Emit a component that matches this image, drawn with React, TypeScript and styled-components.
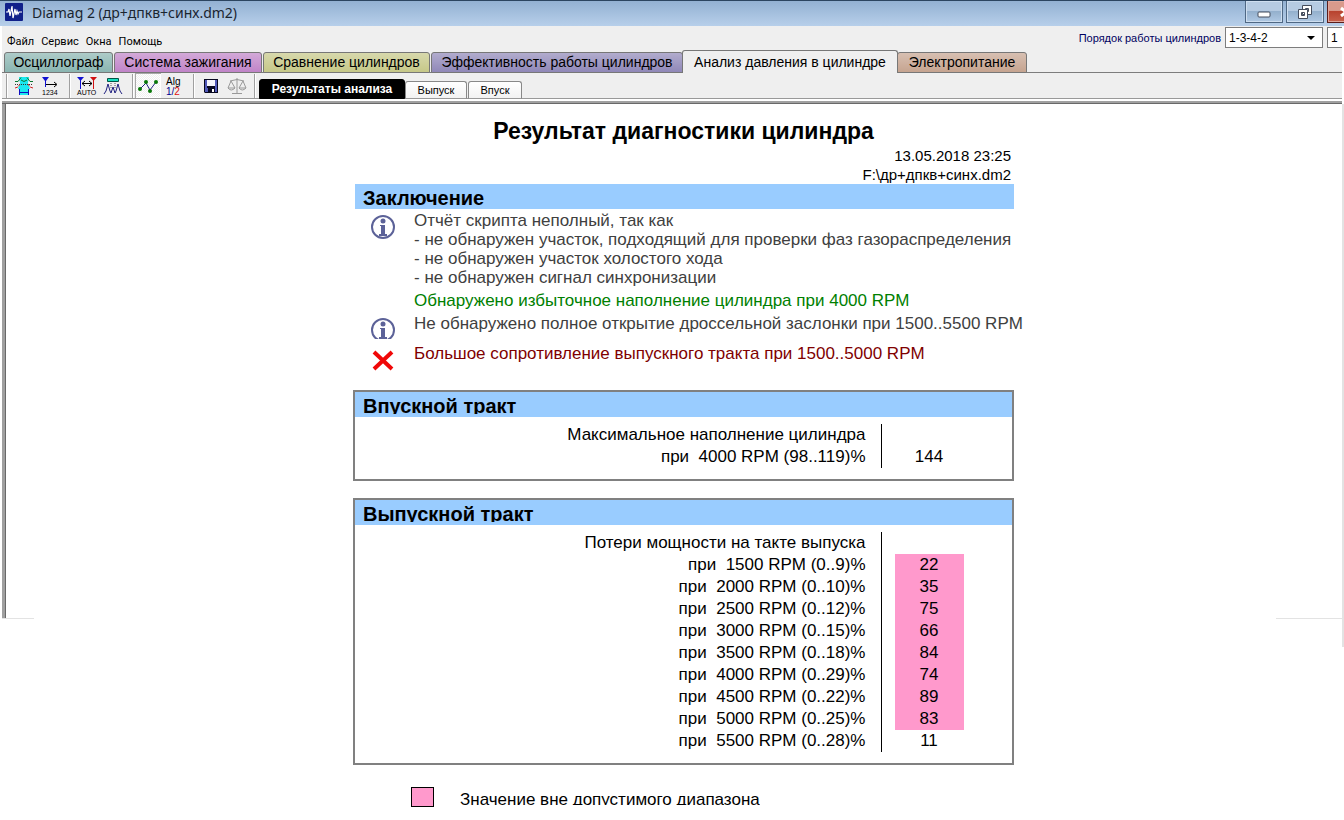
import React from "react";
import styled, { createGlobalStyle, css } from "styled-components";

const Global = createGlobalStyle`
  * { box-sizing: border-box; }
  body { margin: 0; background: #fff; color: #000; font-family: "Liberation Sans", Arial, sans-serif; }
  button, select { font: inherit; color: inherit; margin: 0; padding: 0; border-radius: 0; }
  h1, h2, p, ul { margin: 0; padding: 0; }
`;

const Window = styled.div`
  width: 100%;
  overflow-x: hidden;
`;

const TitleBar = styled.header`
  height: 26px;
  display: flex;
  align-items: flex-start;
  border-top: 1px solid #2c4560;
  background: linear-gradient(#93b1d2, #b7cfea);
  padding-left: 5px;
`;

const AppIcon = styled.svg`
  width: 18px;
  height: 18px;
  margin-top: 2px;
`;

const Caption = styled.span`
  flex: 1;
  padding-left: 9px;
  font: 14px/23px "Noto Sans", sans-serif;
  color: #1a2530;
  white-space: nowrap;
`;

const CaptionButtons = styled.div`
  display: flex;
  gap: 3px;
  margin-right: -21px;
`;

const CaptionButton = styled.button<{ $close?: boolean }>`
  width: 38px;
  height: 22px;
  display: grid;
  place-items: center;
  border: 1px solid ${(p) => (p.$close ? "#5b1d1a" : "#4f6884")};
  border-top: 0;
  box-shadow: inset 0 0 0 1px ${(p) => (p.$close ? "#e0a79c" : "#cfdff0")};
  background: ${(p) =>
    p.$close
      ? "linear-gradient(#d99a8c 0 45%, #b8432f 50%, #c8614c)"
      : "linear-gradient(#b6cbe2 0 45%, #94b0cd 50%, #b0c9e4)"};
`;

const Client = styled.div`
  margin: 0 2px;
  background: #efefef;
`;

const MenuRow = styled.div`
  height: 25px;
  display: flex;
  justify-content: space-between;
`;

const Menu = styled.nav`
  display: flex;
  align-items: flex-start;
  gap: 7px;
  padding: 9px 0 0 5px;
`;

const MenuItem = styled.button`
  border: 0;
  background: none;
  font: 11px/14px Roboto, sans-serif;
`;

const OrderBox = styled.div`
  display: flex;
  gap: 4px;
  padding-top: 1px;
  overflow: hidden;
  font-size: 12px;
  label { color: #000060; font-size: 11px; line-height: 22px; white-space: nowrap; }
`;

const SelectWrap = styled.div<{ $width: number }>`
  position: relative;
  width: ${(p) => p.$width}px;
  svg { position: absolute; right: 8px; top: 9px; pointer-events: none; }
`;

const Select = styled.select`
  width: 100%;
  height: 21px;
  appearance: none;
  border: 1px solid #7d7d7d;
  background: #fff;
  padding-left: 3px;
  line-height: 18px;
`;

const OrderClip = styled.div`
  width: 15px;
  overflow: hidden;
`;

const Tabs = styled.div`
  display: flex;
  align-items: flex-end;
  height: 22px;
  padding-left: 2px;
  box-shadow: inset 0 -1px #7d7d7d;
`;

const Tab = styled.button<{ $width: number; $color?: string; $active?: boolean }>`
  width: ${(p) => p.$width}px;
  height: 21px;
  margin-right: 1px;
  border: 1px solid #777;
  border-radius: 3px 3px 0 0;
  background: linear-gradient(rgba(255, 255, 255, 0.3), rgba(255, 255, 255, 0)) ${(p) => p.$color};
  font-size: 14px;
  line-height: 19px;
  white-space: nowrap;
  ${(p) =>
    p.$active &&
    css`
      height: 23px;
      margin: 0 -1px 0 -2px;
      background: #efefef;
      border-bottom: 0;
    `}
`;

const ToolBar = styled.div`
  display: flex;
  height: 28px;
  padding-left: 4px;
  border-bottom: 2px solid #fff;
  box-shadow: inset 0 -1px #999;
`;

const Separator = styled.i`
  width: 2px;
  height: 24px;
  margin-top: 1px;
  border-left: 1px solid #a0a0a0;
  border-right: 1px solid #fff;
`;

const ToolGroup = styled.div<{ $before?: number; $after?: number }>`
  display: flex;
  align-items: flex-start;
  padding: 0 ${(p) => p.$after ?? 6}px 0 ${(p) => p.$before ?? 3}px;
`;

const Tool = styled.button<{ $on?: boolean }>`
  width: 26px;
  height: 25px;
  border: 0;
  display: grid;
  place-items: center;
  background: ${(p) =>
    p.$on ? "conic-gradient(#fff 25%, #efefef 0 50%, #fff 0 75%, #efefef 0) 0 0 / 2px 2px" : "none"};
  box-shadow: ${(p) => (p.$on ? "inset 1px 1px #a8a8a8, inset -1px -1px #fff" : "none")};
`;

const Views = styled.div`
  display: flex;
  align-items: flex-end;
  padding-left: 3px;
`;

const View = styled.button<{ $width: number; $on?: boolean }>`
  width: ${(p) => p.$width}px;
  height: ${(p) => (p.$on ? 20 : 18)}px;
  margin-right: ${(p) => (p.$on ? 0 : 1)}px;
  border: 1px solid ${(p) => (p.$on ? "#000" : "#888")};
  border-bottom-color: ${(p) => (p.$on ? "#000" : "#999")};
  border-radius: 3px 3px 0 0;
  background: ${(p) => (p.$on ? "#000" : "linear-gradient(#fff, #f2f2f2)")};
  color: ${(p) => (p.$on ? "#fff" : "#000")};
  font-size: ${(p) => (p.$on ? 12 : 11)}px;
  font-weight: ${(p) => (p.$on ? 700 : 400)};
  line-height: 16px;
  white-space: nowrap;
`;

const Viewport = styled.main`
  display: flex;
  align-items: flex-start;
  padding-left: 2px;
`;

const TopEdge = styled.div`
  height: 3px;
  margin: 0 2px;
  background: linear-gradient(#a0a0a0 2px, #696969 2px);
`;

const LeftRail = styled.div`
  width: 32px;
  height: 515px;
  border-bottom: 1px solid #e3e3e3;
  background: linear-gradient(90deg, #a0a0a0 3px, #696969 3px 4px, transparent 4px);
`;

const RightRail = styled.div`
  width: 66px;
  height: 515px;
  border-bottom: 1px solid #e3e3e3;
`;

const OuterEdge = styled.div`
  width: 2px;
  height: 543px;
  background: #e3e3e3;
`;

const Report = styled.article`
  width: 661px;
  margin: 0 auto;
  padding-top: 13px;
  font-size: 17px;
`;

const ReportArea = styled.div`
  flex: 1;
  padding-left: 57px;
`;

const Title = styled.h1`
  margin-bottom: 1px;
  font-size: 23px;
  line-height: 28px;
  text-align: center;
`;

const Meta = styled.p`
  height: 19px;
  overflow: hidden;
  padding-right: 3px;
  text-align: right;
  font-size: 15px;
  line-height: 19px;
`;

const Heading = styled.h2<{ $clip?: boolean }>`
  height: 25px;
  padding-left: 8px;
  background: #99ccff;
  font-size: 20px;
  line-height: 28px;
  span { display: block; overflow: hidden; height: ${(p) => (p.$clip ? 22 : 25)}px; }
`;

const Summary = styled.section`
  padding-left: 2px;
`;

const Messages = styled.ul`
  list-style: none;
`;

const Message = styled.li<{ $color?: string }>`
  display: grid;
  grid-template-columns: 59px 1fr;
  line-height: 19px;
  color: ${(p) => p.$color ?? "#404040"};
  svg { margin: 6px 0 0 16px; }
  p { padding: 2px 0; white-space: pre; }
`;

const Box = styled.section`
  margin-top: 17px;
  border: 2px solid #808080;
`;

const Table = styled.table`
  margin: 7px 0 11px;
  border-collapse: collapse;
  line-height: 22px;
  th { width: 526px; padding: 0 15px 0 0; border-right: 1px solid #000; font-weight: 400; text-align: right; white-space: pre; }
  td { padding: 0 0 0 13px; }
`;

const Value = styled.span<{ $bad?: boolean }>`
  display: block;
  width: 69px;
  height: 22px;
  text-align: center;
  background: ${(p) => (p.$bad ? "#ff99cc" : "none")};
`;

const Legend = styled.div`
  display: flex;
  gap: 26px;
  margin: 22px 0 0 58px;
  line-height: 26px;
`;

const Swatch = styled.i`
  width: 23px;
  height: 20px;
  border: 1px solid #000;
  background: #ff99cc;
`;

const LegendText = styled.span`
  height: 18px;
  overflow: hidden;
`;

const Info = ({ cut = 0 }: { cut?: number }) => (
  <svg width="24" height="24" viewBox="0 0 24 24" fill="none">
    <circle cx="12" cy="12" r="11" stroke="#5c6298" strokeWidth="2" />
    <circle cx="12" cy="6" r="2.500" fill="#5c6298" />
    <path d="M9 10h5v9h2v2H8v-2h2v-8H9z" fill="#5c6298" />
    {cut > 0 && <rect y={24 - cut} width="24" height={cut} fill="#fff" />}
  </svg>
);

const Cross = () => (
  <svg width="24" height="25" viewBox="0 0 24 25" fill="none">
    <path d="M3 4l18 17M21 4L3 21" stroke="#f00808" strokeWidth="4" />
  </svg>
);

const Arrow = () => (
  <svg width="8" height="4" viewBox="0 0 8 4"><path d="M0 0h8L4 4z" /></svg>
);

const intake = [
  { label: "Максимальное наполнение цилиндра" },
  { label: "при  4000 RPM (98..119)%", value: 144 },
];

const exhaust = [
  { label: "Потери мощности на такте выпуска" },
  { label: "при  1500 RPM (0..9)%", value: 22, bad: true },
  { label: "при  2000 RPM (0..10)%", value: 35, bad: true },
  { label: "при  2500 RPM (0..12)%", value: 75, bad: true },
  { label: "при  3000 RPM (0..15)%", value: 66, bad: true },
  { label: "при  3500 RPM (0..18)%", value: 84, bad: true },
  { label: "при  4000 RPM (0..29)%", value: 74, bad: true },
  { label: "при  4500 RPM (0..22)%", value: 89, bad: true },
  { label: "при  5000 RPM (0..25)%", value: 83, bad: true },
  { label: "при  5500 RPM (0..28)%", value: 11 },
];

type Row = { label: string; value?: number; bad?: boolean };

const Results = ({ title, rows }: { title: string; rows: Row[] }) => (
  <Box>
    <Heading $clip><span>{title}</span></Heading>
    <Table>
      <tbody>
        {rows.map((r) => (
          <tr key={r.label}>
            <th scope="row">{r.label}</th>
            <td><Value $bad={r.bad}>{r.value}</Value></td>
          </tr>
        ))}
      </tbody>
    </Table>
  </Box>
);

export default function App() {
  return (
    <Window>
      <Global />
      <TitleBar>
        <AppIcon viewBox="0 0 18 18">
          <rect width="18" height="18" rx="1" fill="#10208a" />
          <path d="M1 9h2l1-3 1 7 2-10 1 12 2-9 1 6 1-4 1 3 1-2h3" fill="none" stroke="#fff" strokeWidth="1.2" />
        </AppIcon>
        <Caption>Diamag 2 (др+дпкв+синх.dm2)</Caption>
        <CaptionButtons>
          <CaptionButton aria-label="Свернуть">
            <svg width="14" height="14"><rect x="1" y="7" width="12" height="5" rx="1" fill="#fff" stroke="#444c5c" /></svg>
          </CaptionButton>
          <CaptionButton aria-label="Восстановить">
            <svg width="16" height="16" fill="#fff" stroke="#444c5c">
              <path d="M5.500 1.500h9v9h-9zM8.500 4.500v3h3v-3z" fillRule="evenodd" />
              <path d="M1.500 5.500h9v9h-9zM4.500 8.500v3h3v-3z" fillRule="evenodd" />
            </svg>
          </CaptionButton>
          <CaptionButton $close aria-label="Закрыть">
            <svg width="14" height="12"><path d="M2 2l10 8M12 2L2 10" stroke="#fff" strokeWidth="3" /></svg>
          </CaptionButton>
        </CaptionButtons>
      </TitleBar>
      <Client>
        <MenuRow>
          <Menu>
            {["Файл", "Сервис", "Окна", "Помощь"].map((m) => <MenuItem key={m}>{m}</MenuItem>)}
          </Menu>
          <OrderBox>
            <label htmlFor="order">Порядок работы цилиндров</label>
            <SelectWrap $width={98}>
              <Select id="order"><option>1-3-4-2</option></Select>
              <Arrow />
            </SelectWrap>
            <OrderClip>
              <SelectWrap $width={40}>
                <Select aria-label="Цилиндр"><option>1</option></Select>
              </SelectWrap>
            </OrderClip>
          </OrderBox>
        </MenuRow>
        <Tabs>
          <Tab $width={109} $color="#8ab5b1">Осциллограф</Tab>
          <Tab $width={148} $color="#c084c8">Система зажигания</Tab>
          <Tab $width={167} $color="#c6c888">Сравнение цилиндров</Tab>
          <Tab $width={252} $color="#9088b8">Эффективность работы цилиндров</Tab>
          <Tab $width={216} $active>Анализ давления в цилиндре</Tab>
          <Tab $width={130} $color="#c6a490">Электропитание</Tab>
        </Tabs>
        <ToolBar>
          <Separator />
          <ToolGroup>
            <Tool aria-label="Область">
              <svg width="20" height="20" fill="none">
                <path d="M5 1h10l-1 6 2 6h-2v6H6v-6H4l2-6z" fill="#19e8f0" />
                <path d="M1 5.500h3l3-4M19 5.500h-3l-3-4M7 4q3 3 6 0" stroke="#087830" />
                <path d="M1 8.500h18" stroke="#333" strokeDasharray="1 1" />
                <path d="M1 12l3-1 2-3M19 12l-3-1-2-3" stroke="#d02020" strokeDasharray="3 1" />
                <path d="M5.500 13v6M14.500 13v6M6 16.500h8" stroke="#1010c0" />
              </svg>
            </Tool>
            <Tool aria-label="Нумерация">
              <svg width="20" height="20" fill="none">
                <path d="M2 1h7L6 5v1H5V5z" fill="#1010d0" /><path d="M5.500 5v6" stroke="#1010d0" />
                <path d="M6 8.500h10M14 6l3 2.500-3 2.500" stroke="#000" />
                <text x="2" y="19" fontSize="7" fill="#000">1234</text>
              </svg>
            </Tool>
          </ToolGroup>
          <Separator />
          <ToolGroup>
            <Tool aria-label="Авто">
              <svg width="22" height="20" fill="none">
                <path d="M1 1h7L4.500 5z" fill="#1010d0" /><path d="M4.500 4v9" stroke="#1010d0" />
                <path d="M14 1h7l-3.500 4z" fill="#d01010" /><path d="M17.500 4v9" stroke="#d01010" />
                <path d="M6 7.500h10M9 5L6 7.500 9 10M13 5l3 2.500-3 2.500" stroke="#000" />
                <text x="1" y="19" fontSize="7" fill="#000">AUTO</text>
              </svg>
            </Tool>
            <Tool aria-label="Спектр">
              <svg width="20" height="20" fill="none">
                <path d="M4.500 2.500h11v3h-11z" fill="#19e0c0" stroke="#054" />
                <path d="M8 7v5M12 7v5" stroke="#555" strokeDasharray="1 1" />
                <path d="M1 18l2-3 2-7 2 7 1 2 2-6 2 6 1-2 2-7 2 7 2 3" stroke="#202080" />
              </svg>
            </Tool>
          </ToolGroup>
          <Separator />
          <ToolGroup $before={1}>
            <Tool $on aria-label="График">
              <svg width="20" height="14" fill="none">
                <path d="M2 10l6-6 4 7 6-8" stroke="#202080" />
                <g fill="#087808"><circle cx="2" cy="10" r="2" /><circle cx="8" cy="3" r="2" /><circle cx="12" cy="12" r="2" /><circle cx="18" cy="3" r="2" /></g>
              </svg>
            </Tool>
            <Tool aria-label="Алгоритм">
              <svg width="18" height="22">
                <text x="1" y="10" fontSize="10">Alg</text>
                <text x="1" y="20" fontSize="10" fill="#000090">1/<tspan fill="#e01010">2</tspan></text>
              </svg>
            </Tool>
          </ToolGroup>
          <Separator />
          <ToolGroup $after={4}>
            <Tool aria-label="Сохранить">
              <svg width="14" height="14">
                <path d="M0 0h14v14H1l-1-1z" fill="#080820" />
                <path d="M1 1h2v8h8V1h2v12H1z" fill="#5058b8" />
                <path d="M3 1h8v6H3z" fill="#f4f4fc" />
                <path d="M4 9h7v4H4z" fill="#080820" /><path d="M8 10h2v3H8z" fill="#fff" />
              </svg>
            </Tool>
            <Tool aria-label="Сравнить">
              <svg width="20" height="18" fill="none" stroke="#999">
                <path d="M10 1v15M5 16.500h10M3 4q7-3 14 0M4 4l-3 7h7zM16 4l-4 7h7zM1 11q3 4 7 0M12 11q3 4 7 0" />
              </svg>
            </Tool>
          </ToolGroup>
          <Separator />
          <Views>
            <View $on $width={146}>Результаты анализа</View>
            <View $width={62}>Выпуск</View>
            <View $width={54}>Впуск</View>
          </Views>
        </ToolBar>
      </Client>
      <TopEdge />
      <Viewport>
        <LeftRail />
        <ReportArea>
          <Report>
            <Title>Результат диагностики цилиндра</Title>
            <Meta>13.05.2018 23:25</Meta>
            <Meta>F:\др+дпкв+синх.dm2</Meta>
            <Summary>
              <Heading><span>Заключение</span></Heading>
              <Messages>
                <Message>
                  <Info />
                  <p>{"Отчёт скрипта неполный, так как\n- не обнаружен участок, подходящий для проверки фаз газораспределения\n- не обнаружен участок холостого хода\n- не обнаружен сигнал синхронизации"}</p>
                </Message>
                <Message $color="#008000"><i /><p>Обнаружено избыточное наполнение цилиндра при 4000 RPM</p></Message>
                <Message><Info cut={3} /><p>Не обнаружено полное открытие дроссельной заслонки при 1500..5500 RPM</p></Message>
                <Message $color="#800000"><Cross /><p>Большое сопротивление выпускного тракта при 1500..5000 RPM</p></Message>
              </Messages>
            </Summary>
            <Results title="Впускной тракт" rows={intake} />
            <Results title="Выпускной тракт" rows={exhaust} />
            <Legend><Swatch /><LegendText>Значение вне допустимого диапазона</LegendText></Legend>
          </Report>
        </ReportArea>
        <RightRail />
        <OuterEdge />
      </Viewport>
    </Window>
  );
}
